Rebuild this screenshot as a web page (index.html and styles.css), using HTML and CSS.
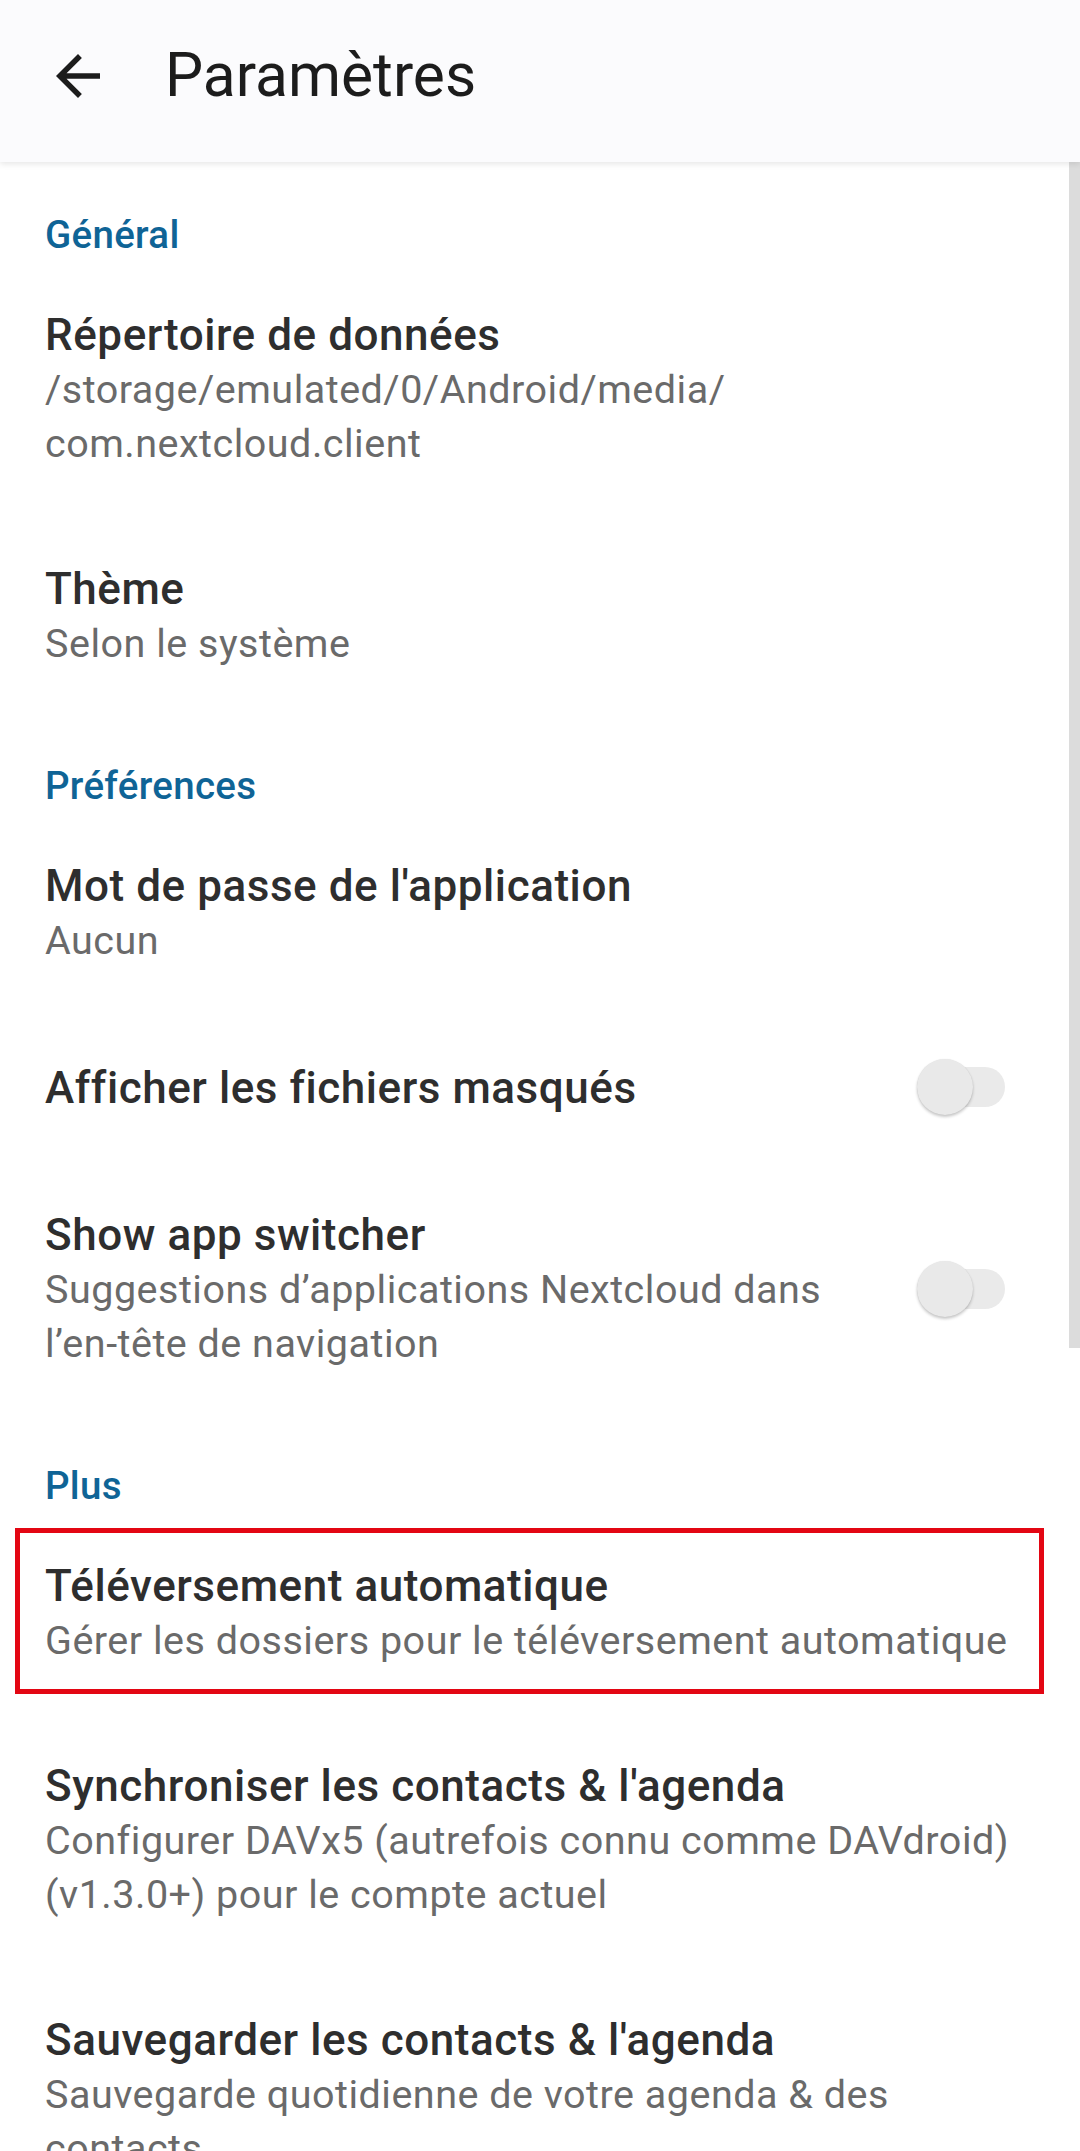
FILE: index.html
```html
<!DOCTYPE html>
<html lang="fr">
<head>
<meta charset="utf-8">
<title>Paramètres</title>
<link rel="stylesheet" href="styles.css">
</head>
<body>
<div class="screen">
  <header class="toolbar">
    <svg class="back" viewBox="0 0 24 24" width="66" height="66" aria-hidden="true"><path d="M20 11H7.83l5.59-5.59L12 4l-8 8 8 8 1.41-1.41L7.83 13H20v-2z" fill="#1c1c1c"/></svg>
    <h1 class="toolbar-title">Paramètres</h1>
  </header>

  <main class="prefs">
    <div class="category">Général</div>
    <div class="item">
      <div class="text">
        <div class="title">Répertoire de données</div>
        <div class="summary">/storage/emulated/0/Android/media/<br>com.nextcloud.client</div>
      </div>
    </div>
    <div class="item">
      <div class="text">
        <div class="title">Thème</div>
        <div class="summary">Selon le système</div>
      </div>
    </div>

    <div class="category">Préférences</div>
    <div class="item">
      <div class="text">
        <div class="title">Mot de passe de l'application</div>
        <div class="summary">Aucun</div>
      </div>
    </div>
    <div class="item item-switch">
      <div class="text">
        <div class="title">Afficher les fichiers masqués</div>
      </div>
      <span class="switch"><span class="track"></span><span class="thumb"></span></span>
    </div>
    <div class="item item-switch">
      <div class="text">
        <div class="title">Show app switcher</div>
        <div class="summary">Suggestions d’applications Nextcloud dans<br>l’en-tête de navigation</div>
      </div>
      <span class="switch"><span class="track"></span><span class="thumb"></span></span>
    </div>

    <div class="category">Plus</div>
    <div class="item item-marked">
      <div class="text">
        <div class="title">Téléversement automatique</div>
        <div class="summary">Gérer les dossiers pour le téléversement automatique</div>
      </div>
      <span class="highlight"></span>
    </div>
    <div class="item">
      <div class="text">
        <div class="title">Synchroniser les contacts &amp; l'agenda</div>
        <div class="summary">Configurer DAVx5 (autrefois connu comme DAVdroid)<br>(v1.3.0+) pour le compte actuel</div>
      </div>
    </div>
    <div class="item">
      <div class="text">
        <div class="title">Sauvegarder les contacts &amp; l'agenda</div>
        <div class="summary">Sauvegarde quotidienne de votre agenda &amp; des<br>contacts</div>
      </div>
    </div>
  </main>

  <div class="scrollbar"></div>
</div>
</body>
</html>
```

FILE: styles.css
```css
html, body {
  margin: 0;
  padding: 0;
  background: #ffffff;
}

body {
  font-family: Roboto, "Noto Sans", "Liberation Sans", sans-serif;
  width: 1080px;
  height: 2151px;
  overflow: hidden;
}

.screen {
  position: relative;
  width: 1080px;
  height: 2151px;
  overflow: hidden;
  background: #ffffff;
}

.toolbar {
  position: relative;
  z-index: 2;
  display: flex;
  align-items: center;
  height: 162px;
  box-sizing: border-box;
  padding: 0 0 10px 45px;
  background: #fbfbfd;
  box-shadow: 0 2px 6px rgba(0, 0, 0, 0.10);
}

.back {
  display: block;
  flex: none;
}

.toolbar-title {
  margin: 0 0 0 54px;
  font-size: 60.5px;
  font-weight: 400;
  color: #1c1c1c;
  line-height: 1.2;
}

.prefs {
  display: flex;
  flex-direction: column;
  padding-top: 3px;
}

.category {
  padding: 47px 45px 4px 45px;
  font-size: 38.5px;
  line-height: 46px;
  font-weight: 500;
  color: #0f6496;
  letter-spacing: 0.3px;
}

.item {
  position: relative;
  display: flex;
  align-items: center;
  padding: 46px 40px 45px 45px;
}

.item-switch {
  padding-right: 75px;
}

.text {
  flex: 1;
  min-width: 0;
  display: flex;
  flex-direction: column;
  gap: 1px;
}

.title {
  font-size: 44px;
  line-height: 54px;
  font-weight: 500;
  color: #2e2e2e;
  letter-spacing: 0.55px;
  white-space: nowrap;
}

.summary {
  font-size: 39.5px;
  line-height: 54px;
  font-weight: 400;
  color: #6a6a6a;
  letter-spacing: 0.5px;
  white-space: nowrap;
}

.switch {
  position: relative;
  flex: none;
  width: 88px;
  height: 58px;
}

.track {
  position: absolute;
  left: 0;
  right: 0;
  top: 8px;
  height: 40px;
  border-radius: 20px;
  background: #eaeaea;
}

.thumb {
  position: absolute;
  left: 0;
  top: 0;
  width: 56px;
  height: 56px;
  border-radius: 50%;
  background: #e9e9e9;
  box-shadow: 0 2px 3px rgba(0, 0, 0, 0.22), 0 0 1px rgba(0, 0, 0, 0.10);
}

.highlight {
  position: absolute;
  left: 15px;
  right: 36px;
  top: 15px;
  bottom: 19px;
  border: 5px solid #e30613;
  pointer-events: none;
}

.scrollbar {
  position: absolute;
  top: 162px;
  right: 0;
  width: 11px;
  height: 1186px;
  background: #dcdcdc;
  z-index: 1;
}
```
